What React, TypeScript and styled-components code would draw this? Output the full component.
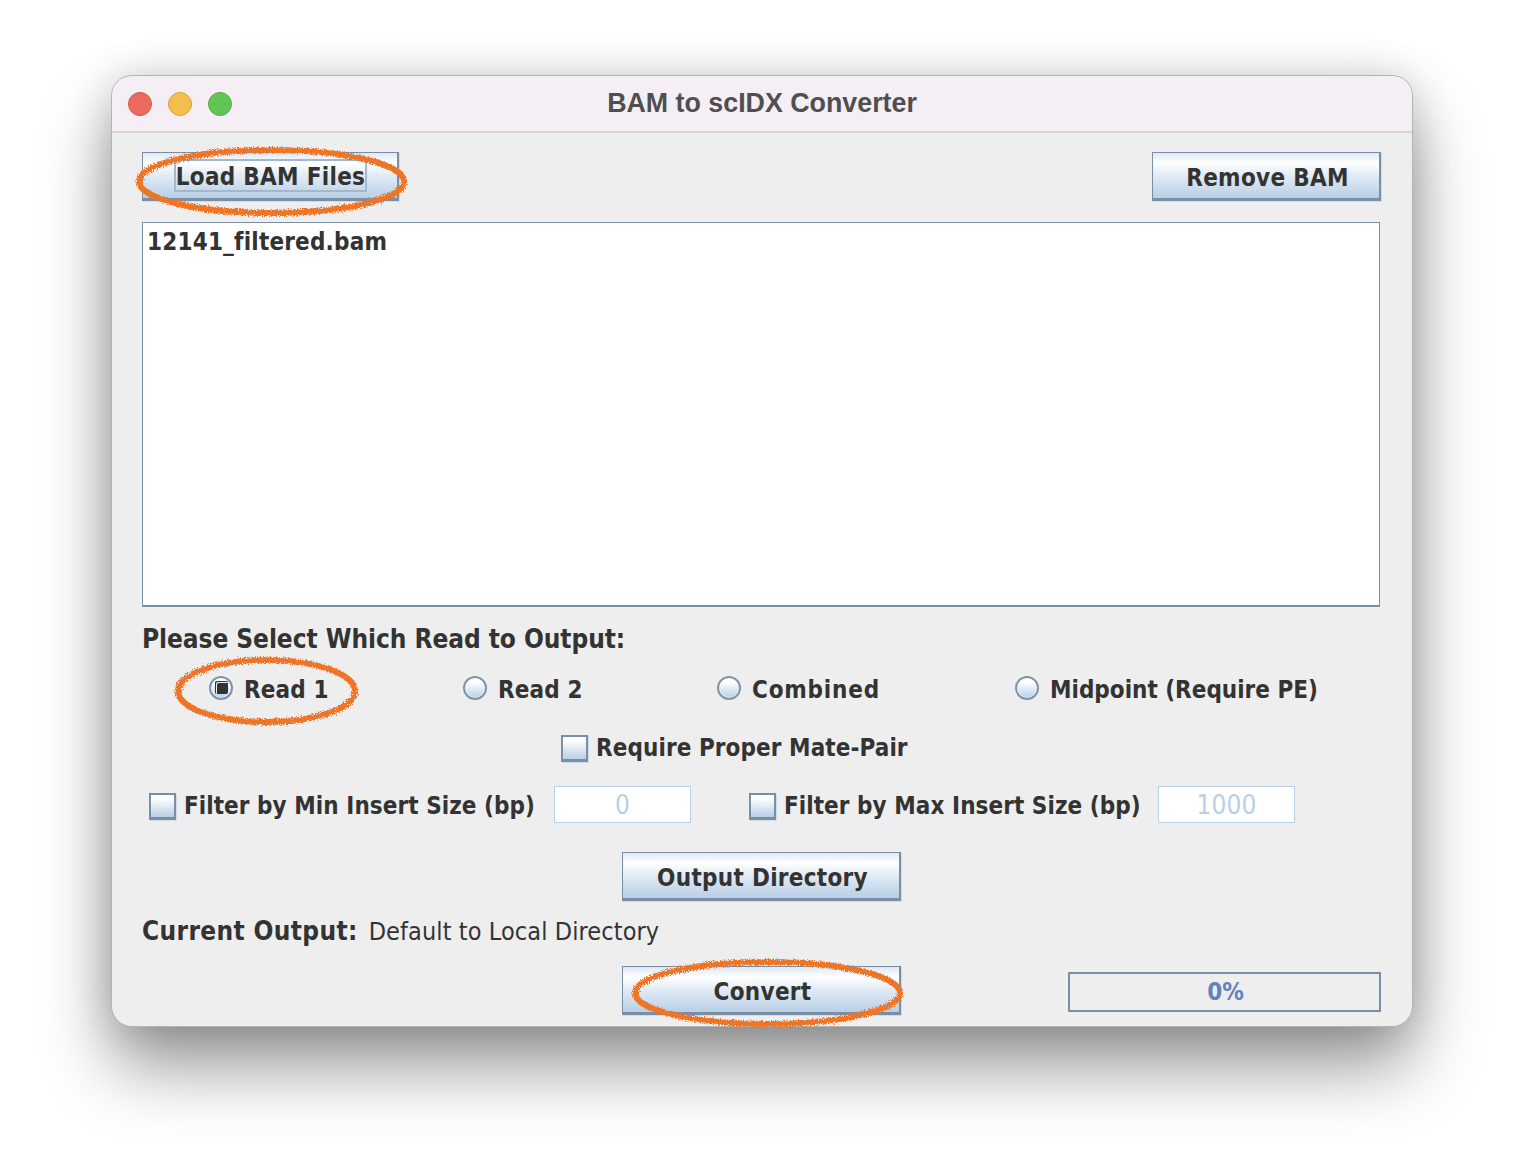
import React from 'react'
import styled, { createGlobalStyle } from 'styled-components'

const GlobalStyle = createGlobalStyle`
body {
  margin: 0;
  background: #ffffff;
  font-family: "DejaVu Sans", sans-serif;
  font-stretch: condensed;
  color: #333333;
}
`

const Page = styled.div`
height: 1174px;
padding-top: 76px;
box-sizing: border-box;
overflow: hidden;
`

const Window = styled.div`
width: 1300px;
height: 950px;
margin-left: 112px;
display: flex;
flex-direction: column;
background: #eeeeee;
border-radius: 20px;
box-shadow: 0 0 0 1px #b4b4b4, 0 40px 70px rgba(0, 0, 0, 0.42), 0 0 40px rgba(0, 0, 0, 0.16);
`

const TitleBar = styled.div`
position: relative;
height: 57px;
flex-shrink: 0;
box-sizing: border-box;
display: flex;
align-items: center;
justify-content: center;
background: #f5eef5;
border-bottom: 2px solid #d9d4d9;
border-radius: 20px 20px 0 0;
`

const Lights = styled.div`
position: absolute;
left: 16px;
top: 16px;
display: flex;
gap: 16px;
`

const Light = styled.span<{ $fill: string; $edge: string }>`
width: 24px;
height: 24px;
box-sizing: border-box;
border-radius: 50%;
background: ${props => props.$fill};
border: 1px solid ${props => props.$edge};
`

const Title = styled.div`
font-family: "Liberation Sans", Arial, sans-serif;
font-size: 26.8px;
font-weight: 700;
color: #4f4f4f;
`

const Content = styled.div`
flex: 1;
display: flex;
flex-direction: column;
padding: 19px 31px 0 30px;
`

const TopRow = styled.div`
display: flex;
justify-content: space-between;
`

const Anchor = styled.div`
position: relative;
`

const Button = styled.button<{ $width: number }>`
width: ${props => props.$width}px;
height: 49px;
padding: 4px 0 0 3px;
box-sizing: border-box;
display: flex;
align-items: center;
justify-content: center;
font-family: "DejaVu Sans", sans-serif;
font-stretch: condensed;
font-size: 24px;
font-weight: 700;
letter-spacing: 0.3px;
color: #333333;
border-style: solid;
border-color: #7a8ea6;
border-width: 1px 2px 3px 1px;
border-radius: 0;
background: linear-gradient(#dde8f3 0%, #ffffff 22%, #e2ebf5 50%, #b8cfe5 100%);
box-shadow: 1px 1px 0 #cfdce9;
`

const FocusRing = styled.span`
display: block;
height: 33px;
margin: -4px 0 0 -2px;
line-height: 33px;
box-sizing: border-box;
border: 2px solid #a3b8cc;
`

const FileList = styled.div`
position: relative;
margin-top: 21px;
width: 1238px;
height: 385px;
box-sizing: border-box;
padding: 4px 4px;
background: #ffffff;
border: 1px solid #7a8ea6;
border-bottom-width: 2px;
font-size: 24px;
font-weight: 700;
letter-spacing: 0.2px;
line-height: 30px;
`

const SectionLabel = styled.div`
margin-top: 17px;
height: 30px;
font-size: 26px;
font-weight: 700;
letter-spacing: -0.06px;
line-height: 30px;
`

const RadioRow = styled.div`
margin-top: 16px;
height: 40px;
padding-left: 67px;
display: grid;
grid-template-columns: 254px 254px 298px 1fr;
align-items: center;
`

const Option = styled.label<{ $tracking?: number }>`
display: flex;
align-items: center;
gap: 11px;
font-size: 24px;
font-weight: 700;
letter-spacing: ${props => props.$tracking ?? 0.15}px;
white-space: nowrap;
`

const Radio = styled.span<{ $checked?: boolean }>`
width: 24px;
height: 24px;
margin-top: -5px;
box-sizing: border-box;
border-radius: 50%;
border: 2px solid #8194aa;
background: linear-gradient(#ffffff 20%, #b8cfe5 100%);
box-shadow: inset 0 0 0 1px rgba(255, 255, 255, 0.55);
display: flex;
align-items: center;
justify-content: center;
&::after {
  content: '';
  display: ${props => (props.$checked ? 'block' : 'none')};
  width: 13px;
  height: 13px;
  border-radius: 2px;
  background: #333333;
  box-shadow: inset 1px 1px 0 #333333, inset 2px 2px 0 #e8eef5;
}
`

const Check = styled.span`
width: 27px;
height: 27px;
flex-shrink: 0;
box-sizing: border-box;
border: 2px solid #7a8ea6;
border-bottom-width: 3px;
background: linear-gradient(#ffffff 15%, #b8cfe5 100%);
box-shadow: 1px 1px 0 #cfdce9;
`

const CenterRow = styled.div`
margin-top: 18px;
height: 40px;
padding-left: 419px;
display: flex;
align-items: center;
gap: 8px;
font-size: 24px;
font-weight: 700;
letter-spacing: 0.08px;
`

const FilterRow = styled.div`
margin-top: 18px;
height: 40px;
padding-left: 7px;
display: flex;
align-items: center;
font-size: 24px;
font-weight: 700;
letter-spacing: 0.06px;
white-space: nowrap;
`

const FilterLabel = styled.span<{ $width: number }>`
width: ${props => props.$width}px;
margin-left: 8px;
`

const NumberField = styled.div<{ $after?: number }>`
width: 137px;
height: 37px;
box-sizing: border-box;
margin: -4px ${props => props.$after ?? 0}px 0 19px;
background: #ffffff;
border: 1px solid #b8cfe5;
text-align: center;
font-size: 26px;
font-weight: 400;
line-height: 36px;
color: #b8cfe5;
`

const OutputRow = styled.div`
margin-top: 26px;
padding-left: 480px;
`

const CurrentOutput = styled.div`
margin-top: 15px;
height: 30px;
display: flex;
align-items: center;
gap: 11px;
font-size: 25px;
letter-spacing: 0.1px;
white-space: nowrap;
`

const CurrentLabel = styled.span`
font-size: 26px;
font-weight: 700;
letter-spacing: 0.35px;
`

const BottomRow = styled.div`
margin-top: 20px;
padding-left: 480px;
display: flex;
align-items: center;
gap: 167px;
`

const Progress = styled.div`
width: 314px;
height: 40px;
margin-top: 3px;
padding-left: 2px;
box-sizing: border-box;
border: 2px solid #7a8ea6;
display: flex;
align-items: center;
justify-content: center;
font-size: 24px;
font-weight: 700;
color: #6382bf;
`

const OvalSvg = styled.svg<{ $left: number; $top: number }>`
position: absolute;
left: ${props => props.$left}px;
top: ${props => props.$top}px;
pointer-events: none;
overflow: visible;
`

const Oval: React.FC<{ left: number; top: number; width: number; height: number }> = ({ left, top, width, height }) => (
  <OvalSvg $left={left} $top={top} width={width} height={height} viewBox={`0 0 ${width} ${height}`}>
    <ellipse
      cx={width / 2}
      cy={height / 2}
      rx={width / 2 - 3}
      ry={height / 2 - 3}
      fill="none"
      stroke="#ef7426"
      strokeWidth={6}
      filter="url(#scribble)"
    />
  </OvalSvg>
)

const App: React.FC = () => {
  return <Page>
    <GlobalStyle />
    <svg width="0" height="0" style={{ position: 'absolute' }}>
      <filter id="scribble" x="-5%" y="-10%" width="110%" height="120%">
        <feTurbulence type="fractalNoise" baseFrequency="0.8" numOctaves="2" seed="4" />
        <feDisplacementMap in="SourceGraphic" scale="6" />
      </filter>
    </svg>
    <Window>
      <TitleBar>
        <Lights>
          <Light $fill="#ec6a5e" $edge="#d2564b" />
          <Light $fill="#f5bf4f" $edge="#d8a23c" />
          <Light $fill="#61c554" $edge="#4fac43" />
        </Lights>
        <Title>BAM to scIDX Converter</Title>
      </TitleBar>
      <Content>
        <TopRow>
          <Anchor>
            <Button $width={257}><FocusRing>Load BAM Files</FocusRing></Button>
            <Oval left={-6} top={-5} width={271} height={69} />
          </Anchor>
          <Button $width={229}>Remove BAM</Button>
        </TopRow>
        <FileList>12141_filtered.bam</FileList>
        <SectionLabel>Please Select Which Read to Output:</SectionLabel>
        <RadioRow>
          <Anchor>
            <Option><Radio $checked />Read 1</Option>
            <Oval left={-34} top={-19} width={183} height={68} />
          </Anchor>
          <Option><Radio />Read 2</Option>
          <Option $tracking={0.8}><Radio />Combined</Option>
          <Option $tracking={0}><Radio />Midpoint (Require PE)</Option>
        </RadioRow>
        <CenterRow><Check />Require Proper Mate-Pair</CenterRow>
        <FilterRow>
          <Check />
          <FilterLabel $width={351}>Filter by Min Insert Size (bp)</FilterLabel>
          <NumberField $after={58}>0</NumberField>
          <Check />
          <FilterLabel $width={355}>Filter by Max Insert Size (bp)</FilterLabel>
          <NumberField>1000</NumberField>
        </FilterRow>
        <OutputRow><Button $width={279}>Output Directory</Button></OutputRow>
        <CurrentOutput>
          <CurrentLabel>Current Output:</CurrentLabel>
          Default to Local Directory
        </CurrentOutput>
        <BottomRow>
          <Anchor>
            <Button $width={279}>Convert</Button>
            <Oval left={10} top={-7} width={271} height={68} />
          </Anchor>
          <Progress>0%</Progress>
        </BottomRow>
      </Content>
    </Window>
  </Page>
}

export default App
